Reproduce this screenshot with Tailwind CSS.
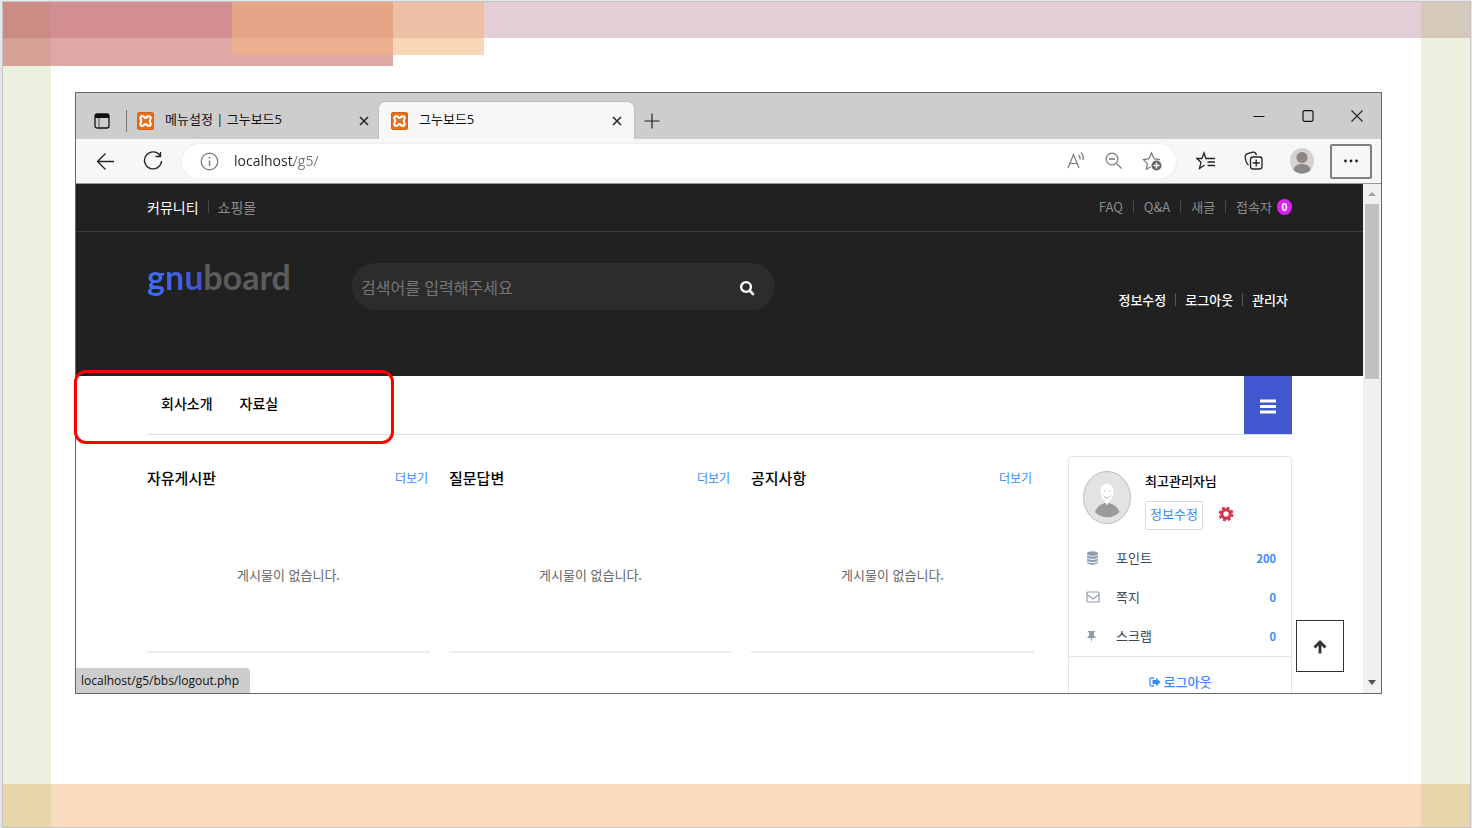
<!DOCTYPE html>
<html lang="ko">
<head>
    <meta charset="UTF-8">
    <meta name="viewport" content="width=device-width, initial-scale=1.0">
    <title>그누보드5</title>
    <script src="https://cdn.jsdelivr.net/npm/@tailwindcss/browser@4"></script>
</head>
<body class="bg-[#e6e6e6] font-['Open_Sans','Noto_Sans_CJK_KR',sans-serif]">
    <!-- Shared icon shapes -->
    <svg class="hidden">
        <symbol id="xampp" viewBox="0 0 17 18">
            <rect x=".5" y=".5" width="16" height="17" rx="1.5" fill="#ee6c14" stroke="#c9661f"/>
            <path d="M5.500 4C7 4 7 6 8.500 6S10 4 11.500 4c2 0 2.600 1.800 1.900 3-.4.700-.6 1.200-.6 2s.2 1.300.6 2c.7 1.200.1 3-1.900 3-1.500 0-1.500-2-3-2s-1.500 2-3 2c-2 0-2.600-1.800-1.900-3 .4-.7.6-1.200.6-2s-.2-1.300-.6-2C2.900 5.800 3.500 4 5.500 4z" fill="none" stroke="#fff" stroke-width="2.200"/>
        </symbol>
        <symbol id="close" viewBox="0 0 10 10">
            <path d="M1 1l8 8M9 1L1 9" stroke="#222" stroke-width="1.5" fill="none"/>
        </symbol>
    </svg>

    <div class="relative flex h-screen overflow-hidden pt-px pl-0.5 pr-px">
        <div class="relative flex flex-1 border border-[#c6c6c6] bg-white pt-[90px] pb-[133px] pl-[72px] pr-[88px]">
            <!-- Slide theme bands -->
            <div class="absolute inset-x-0 top-0 h-9 bg-[#e4cdd5]"></div>
            <div class="absolute inset-x-0 bottom-0 h-[43px] bg-[#fadcc0]"></div>
            <div class="absolute inset-y-0 left-0 w-12 bg-[#9bbb59]/20"></div>
            <div class="absolute inset-y-0 right-0 w-[49px] bg-[#9bbb59]/20"></div>
            <div class="absolute left-0 top-0 h-16 w-[390px] bg-[#c0504d]/50"></div>
            <div class="absolute left-[229px] top-0 h-[53px] w-[252px] bg-[#f3b77f]/57"></div>

            <div class="relative flex min-w-0 flex-1">
                <!-- Browser window -->
                <div class="flex min-w-0 flex-1 flex-col overflow-hidden border border-[#666]">
                    <!-- Tab strip -->
                    <div class="flex h-[46px] shrink-0 items-end bg-[#cdcdcd]">
                        <div class="flex h-9 items-center pl-[18px]">
                            <button aria-label="탭 작업 메뉴">
                                <svg class="h-4 w-4" viewBox="0 0 16 16"><rect x="1" y="1" width="14" height="14" rx="2" fill="none" stroke="#111" stroke-width="1.3"/><path d="M1 2.500a1.500 1.500 0 0 1 1.500-1.500h11A1.500 1.500 0 0 1 15 2.500V5H1z" fill="#111"/><path d="M5 5v10" stroke="#555"/></svg>
                            </button>
                            <span class="ml-4 h-[22px] w-px bg-[#777]"></span>
                        </div>
                        <div class="flex h-9 w-[252px] items-center pl-[10px] pr-[10px] text-[13px] text-[#111]">
                            <svg class="h-[18px] w-[17px]"><use href="#xampp"/></svg>
                            <span class="ml-[11px] flex-1 pb-0.5">메뉴설정 | 그누보드5</span>
                            <button aria-label="탭 닫기"><svg class="h-2.5 w-2.5"><use href="#close"/></svg></button>
                        </div>
                        <div class="flex h-[37px] w-[255px] items-center rounded-t-md bg-[#f7f7f7] pl-3 pr-3 text-[13px] text-[#111] shadow-[0_0_2px_#999]">
                            <svg class="h-[18px] w-[17px]"><use href="#xampp"/></svg>
                            <span class="ml-[11px] flex-1 pb-0.5">그누보드5</span>
                            <button aria-label="탭 닫기"><svg class="h-2.5 w-2.5"><use href="#close"/></svg></button>
                        </div>
                        <button class="flex h-9 w-9 items-center justify-center" aria-label="새 탭">
                            <svg class="h-4 w-4" viewBox="0 0 16 16"><path d="M8 .5v15M.5 8h15" stroke="#222" stroke-width="1.200"/></svg>
                        </button>
                        <div class="flex h-full flex-1 items-center justify-end">
                            <button class="flex w-[49px] justify-center" aria-label="최소화"><svg class="h-3 w-3" viewBox="0 0 12 12"><path d="M.5 6.500h11" stroke="#111"/></svg></button>
                            <button class="flex w-[49px] justify-center" aria-label="최대화"><svg class="h-3 w-3" viewBox="0 0 12 12"><rect x="1" y=".7" width="10" height="10.600" rx="1.500" fill="none" stroke="#111" stroke-width="1.200"/></svg></button>
                            <button class="flex w-[49px] justify-center" aria-label="닫기"><svg class="h-3 w-3" viewBox="0 0 12 12"><path d="M.5.5l11 11M11.500.5l-11 11" stroke="#222" stroke-width="1.100"/></svg></button>
                        </div>
                    </div>

                    <!-- Toolbar -->
                    <div class="flex h-[45px] shrink-0 items-center border-b border-[#999] bg-[#f7f7f7] pr-[9px]">
                        <button class="ml-5 w-[19px]" aria-label="뒤로"><svg class="h-[19px] w-[19px]" viewBox="0 0 19 19"><path d="M18 9.500H1.500M9.500 1.500l-8 8 8 8" fill="none" stroke="#222" stroke-width="1.300"/></svg></button>
                        <button class="ml-7 w-5" aria-label="새로 고침"><svg class="h-5 w-5" viewBox="0 0 20 20"><path d="M17 4.500A8.500 8.500 0 1 0 18.500 10M17.500 1v4.500H12.500" fill="none" stroke="#222" stroke-width="1.400"/></svg></button>
                        <div class="ml-[19px] flex h-[35px] min-w-0 flex-1 items-center rounded-full bg-white pl-[18px] pr-[14px] shadow-[0_0_2px_#ddd]">
                            <svg class="h-[19px] w-[19px] shrink-0" viewBox="0 0 19 19"><circle cx="9.500" cy="9.500" r="8.300" fill="none" stroke="#777" stroke-width="1.200"/><path d="M9.500 8.500v5.500M9.500 5v1.600" stroke="#777" stroke-width="1.400"/></svg>
                            <input type="text" aria-label="주소 표시줄" value="localhost/g5/" class="ml-[15px] min-w-0 flex-1 bg-[linear-gradient(90deg,#222_60px,#777_60px)] bg-clip-text text-sm text-transparent outline-none">
                            <div class="flex items-center gap-[18px]">
                                <button aria-label="소리내어 읽기"><svg class="h-5 w-5" viewBox="0 0 20 20"><path d="M2 17L7.500 3.500 13 17M4 12.500h7M12.500 4a5 5 0 0 1 1.500 4.500M15 1.500a8 8 0 0 1 2 7.500" fill="none" stroke="#777" stroke-width="1.200"/></svg></button>
                                <button aria-label="축소"><svg class="h-5 w-5" viewBox="0 0 20 20"><circle cx="8" cy="8" r="5.800" fill="none" stroke="#777" stroke-width="1.200"/><path d="M12.500 12.500l5 5M5 8h6" stroke="#777" stroke-width="1.300"/></svg></button>
                                <button aria-label="즐겨찾기에 추가"><svg class="h-5 w-5" viewBox="0 0 20 20"><path d="M8.500 16l-4 2.200.9-5.600L1.500 8.600l5.500-.9L9.500 2l2.500 5.700 6 .9" fill="none" stroke="#777" stroke-width="1.200"/><circle cx="14.500" cy="14.500" r="5" fill="#666"/><path d="M14.500 11.500v6M11.500 14.500h6" stroke="#fff" stroke-width="1.400"/></svg></button>
                            </div>
                        </div>
                        <button class="ml-5" aria-label="즐겨찾기"><svg class="h-5 w-5" viewBox="0 0 20 20"><path d="M12.500 7.500H9.800L8 2 5.800 7.500H1l4 3.800L3.500 17.500 8.500 14M11 7.500h8M11.500 11h7.500M11.500 14.500h7.500" fill="none" stroke="#222" stroke-width="1.300"/></svg></button>
                        <button class="ml-7" aria-label="컬렉션"><svg class="h-5 w-5" viewBox="0 0 20 20"><path d="M4.500 14C2 13 1 6.500 1.200 5 1.500 3 3 2.500 9 1.200c2-.3 3 .8 3.500 3" fill="none" stroke="#222" stroke-width="1.300"/><rect x="6.500" y="6" width="11.500" height="12" rx="2.500" fill="none" stroke="#222" stroke-width="1.300"/><path d="M12.200 8.500v7M8.700 12h7" stroke="#222" stroke-width="1.300"/></svg></button>
                        <button class="ml-[26px]" aria-label="프로필"><svg class="h-[26px] w-6" viewBox="0 0 24 26"><ellipse cx="12" cy="13" rx="12" ry="13" fill="#d5d2cf"/><circle cx="12" cy="9.500" r="5.500" fill="#8c8886"/><path d="M3.500 22c1-8 16-8 17 0-4 4.500-13 4.500-17 0z" fill="#8c8886"/></svg></button>
                        <button class="ml-4 flex h-[35px] w-[42px] items-center justify-center rounded-xs border-2 border-[#7c8187]" aria-label="설정 및 기타"><svg class="h-1 w-4" viewBox="0 0 16 4"><g fill="#222"><circle cx="2.500" cy="2" r="1.400"/><circle cx="8" cy="2" r="1.400"/><circle cx="13.500" cy="2" r="1.400"/></g></svg></button>
                    </div>

                    <!-- Viewport -->
                    <div class="relative flex min-h-0 flex-1">
                        <div class="min-w-0 flex-1 overflow-hidden bg-white font-['Noto_Sans_CJK_KR',sans-serif] text-[13px]">
                            <header class="bg-[#212121]">
                                <div class="flex h-12 items-center justify-between border-b border-[#3b3b3b] px-[71px] pb-0.5 text-[#8c8c8c]">
                                    <div class="flex items-center gap-[9px] text-sm">
                                        <a href="#" class="text-white">커뮤니티</a>
                                        <span class="h-[13px] w-px bg-[#4a4a4a]"></span>
                                        <a href="#">쇼핑몰</a>
                                    </div>
                                    <div class="flex items-center gap-[10px]">
                                        <a href="#">FAQ</a>
                                        <span class="h-[13px] w-px bg-[#4a4a4a]"></span>
                                        <a href="#">Q&amp;A</a>
                                        <span class="h-[13px] w-px bg-[#4a4a4a]"></span>
                                        <a href="#">새글</a>
                                        <span class="h-[13px] w-px bg-[#4a4a4a]"></span>
                                        <a href="#" class="flex items-center gap-[5px]">접속자
                                            <strong class="flex h-4 w-[15px] items-center justify-center rounded-full bg-[#da22f2] text-[10px] text-white">0</strong>
                                        </a>
                                    </div>
                                </div>
                                <div class="flex h-36 items-start px-[71px] pt-[31px]">
                                    <a href="#" class="w-[205px] shrink-0 font-['Lato',sans-serif] text-[34px]/7 font-bold text-[#5c5c5c]"><span class="bg-linear-to-r from-[#3d6dfa] to-[#4652c8] bg-clip-text pb-2 text-transparent">gnu</span>board</a>
                                    <form class="flex h-[47px] w-[423px] items-center rounded-full bg-[#2c2c2c] pl-[9px] pr-5">
                                        <input type="text" aria-label="검색어" placeholder="검색어를 입력해주세요" class="h-full min-w-0 flex-1 text-base text-white outline-none placeholder:text-[#757575]">
                                        <button type="button" aria-label="검색"><svg class="mt-0.5 h-4 w-4" viewBox="0 0 16 16"><circle cx="7" cy="7" r="4.900" fill="none" stroke="#fff" stroke-width="2.400"/><path d="M10.500 10.500l3.500 3.500" stroke="#fff" stroke-width="2.600" stroke-linecap="round"/></svg></button>
                                    </form>
                                    <div class="ml-auto mt-[27px] flex items-center gap-[9px] pr-1 font-medium text-white">
                                        <a href="#">정보수정</a>
                                        <span class="h-[13px] w-px bg-[#555]"></span>
                                        <a href="#">로그아웃</a>
                                        <span class="h-[13px] w-px bg-[#555]"></span>
                                        <a href="#">관리자</a>
                                    </div>
                                </div>
                            </header>

                            <nav class="mx-[71px] flex h-[59px] border-b border-[#dde0e3] text-sm font-medium text-black">
                                <a href="#" class="px-[14px] pt-[17px]">회사소개</a>
                                <a href="#" class="px-[13px] pt-[17px]">자료실</a>
                                <button class="ml-auto flex h-[58px] w-12 items-center justify-center bg-[#4158d1]" aria-label="전체메뉴">
                                    <svg class="mt-0.5 h-[15px] w-4" viewBox="0 0 16 15"><path d="M0 2h16M0 7.500h16M0 13h16" stroke="#fff" stroke-width="2.800"/></svg>
                                </button>
                            </nav>

                            <div class="mx-[71px] flex gap-[34px] pt-[21px]">
                                <div class="grid flex-1 grid-cols-3 gap-[19px]">
                                    <section class="h-[197px] border-b-2 border-[#e9eef0]">
                                        <div class="flex items-center justify-between pt-[10px]">
                                            <h2 class="text-[15px]/6 font-medium text-black">자유게시판</h2>
                                            <a href="#" class="pr-0.5 text-xs text-[#3a8afd]">더보기</a>
                                        </div>
                                        <p class="mt-[75px] text-center text-[#666]">게시물이 없습니다.</p>
                                    </section>
                                    <section class="h-[197px] border-b-2 border-[#e9eef0]">
                                        <div class="flex items-center justify-between pt-[10px]">
                                            <h2 class="text-[15px]/6 font-medium text-black">질문답변</h2>
                                            <a href="#" class="pr-0.5 text-xs text-[#3a8afd]">더보기</a>
                                        </div>
                                        <p class="mt-[75px] text-center text-[#666]">게시물이 없습니다.</p>
                                    </section>
                                    <section class="h-[197px] border-b-2 border-[#e9eef0]">
                                        <div class="flex items-center justify-between pt-[10px]">
                                            <h2 class="text-[15px]/6 font-medium text-black">공지사항</h2>
                                            <a href="#" class="pr-0.5 text-xs text-[#3a8afd]">더보기</a>
                                        </div>
                                        <p class="mt-[75px] text-center text-[#666]">게시물이 없습니다.</p>
                                    </section>
                                </div>

                                <!-- Member box -->
                                <aside class="h-[260px] w-56 rounded-sm border border-[#dde7e9]">
                                    <div class="flex pl-[14px] pt-[14px]">
                                        <svg class="h-[53px] w-12" viewBox="0 0 48 53"><ellipse cx="24" cy="26.500" rx="23.500" ry="26" fill="#e3e3e3" stroke="#bcbcbc"/><path d="M12 41c2-6 7-9 12-9s10 3 12.500 9c-6 7-18.500 7-24.500 0z" fill="#9b9b9b"/><path d="M24 13c4.500 0 7 4 6.500 9-.4 4-2.500 6.500-4.500 8.500l-2 4-2-4c-2-2-4-4.500-4.500-8.500-.5-5 2-9 6.500-9z" fill="#fff"/><path d="M20.500 24.500c1.500 3 5.500 3 7 0M21 20h1.500M26 20h1.500" fill="none" stroke="#bbb"/></svg>
                                        <div class="ml-[14px]">
                                            <strong class="block font-medium text-black">최고관리자님</strong>
                                            <div class="mt-[10px] flex items-center gap-[15px]">
                                                <a href="#" class="flex h-[29px] w-[58px] items-center justify-center rounded-xs border border-[#d5dadf] pb-0.5 text-[#3a8afd]">정보수정</a>
                                                <a href="#" aria-label="관리자" class="pb-0.5"><svg class="h-4 w-4" viewBox="0 0 16 16"><circle cx="8" cy="8" r="4.200" fill="none" stroke="#d5354a" stroke-width="3"/><circle cx="8" cy="8" r="6.200" fill="none" stroke="#d5354a" stroke-width="2.400" stroke-dasharray="2.800 2.070"/></svg></a>
                                            </div>
                                        </div>
                                    </div>
                                    <ul class="mt-[9px] px-[15px] text-[#3c4658]">
                                        <li><a href="#" class="flex h-[39px] items-center"><svg class="h-3.5 w-[18px]" viewBox="0 0 18 14"><g fill="#8c9eb0"><ellipse cx="8.500" cy="2.500" rx="5.500" ry="2.300"/><path d="M3 4.300c2 1.700 9 1.700 11 0v2c-2 2-9 2-11 0zM3 7.500c2 1.700 9 1.700 11 0v2c-2 2-9 2-11 0zM3 10.700c2 1.700 9 1.700 11 0v1c-2 2.600-9 2.600-11 0z"/></g></svg><span class="ml-[14px]">포인트</span><strong class="ml-auto text-[11px] text-[#3a8afd]">200</strong></a></li>
                                        <li><a href="#" class="flex h-[39px] items-center"><svg class="h-3.5 w-[18px]" viewBox="0 0 18 14"><rect x="3" y="2" width="12" height="10" rx="1" fill="none" stroke="#8c9eb0" stroke-width="1.200"/><path d="M3 4.500l6 4.500 6-4.500" fill="none" stroke="#8c9eb0" stroke-width="1.200"/></svg><span class="ml-[14px]">쪽지</span><strong class="ml-auto text-[11px] text-[#3a8afd]">0</strong></a></li>
                                        <li><a href="#" class="flex h-[39px] items-center"><svg class="h-3.5 w-[18px]" viewBox="0 0 18 14"><path d="M4 2h7v1.300h-1V6.500l2 2.500H8.200L7.500 13.500 6.800 9H3l2-2.500V3.300H4z" fill="#8c9eb0"/></svg><span class="ml-[14px]">스크랩</span><strong class="ml-auto text-[11px] text-[#3a8afd]">0</strong></a></li>
                                    </ul>
                                    <a href="#" class="flex h-[51px] items-center justify-center gap-[3px] border-t border-[#dde7e9] font-medium text-[#3a8afd]">
                                        <svg class="h-3 w-3" viewBox="0 0 12 12"><path d="M5 2H2.500C1.500 2 1 2.500 1 3.500v5c0 1 .5 1.500 1.500 1.500H5" fill="none" stroke="#3a8afd" stroke-width="1.300"/><path d="M7 1.800L11.500 6 7 10.200V8H3.500V4H7z" fill="#3a8afd"/></svg>
                                        로그아웃
                                    </a>
                                </aside>
                            </div>
                        </div>

                        <!-- Scrollbar -->
                        <div class="flex w-[18px] flex-col items-center bg-[#f0f0f0]">
                            <svg class="my-2 h-1 w-2" viewBox="0 0 8 4"><path d="M4 0l4 4H0z" fill="#a0a0a0"/></svg>
                            <div class="h-[175px] w-[14px] bg-[#c1c1c1]"></div>
                            <svg class="mb-2 mt-auto h-[5px] w-2" viewBox="0 0 8 5"><path d="M0 0h8L4 5z" fill="#505050"/></svg>
                        </div>

                        <button class="absolute bottom-[21px] right-[37px] flex h-[52px] w-12 items-center justify-center border border-[#333] bg-white pt-0.5" aria-label="상단으로">
                            <svg class="h-[14px] w-[14px]" viewBox="0 0 14 14"><path d="M7 13.500V2.500M1.500 7.500L7 2l5.500 5.500" fill="none" stroke="#333" stroke-width="2.800"/></svg>
                        </button>
                        <div class="absolute bottom-0 left-0 flex h-[25px] w-[174px] items-center rounded-tr bg-[#cdcdcd] pl-[5px] text-xs text-[#111]">localhost/g5/bbs/logout.php</div>
                    </div>
                </div>

                <!-- Highlight around the new menu -->
                <div class="absolute left-[-1px] top-[278px] h-[74px] w-80 rounded-xl border-3 border-[#f00]"></div>
            </div>
        </div>
    </div>
</body>
</html>
